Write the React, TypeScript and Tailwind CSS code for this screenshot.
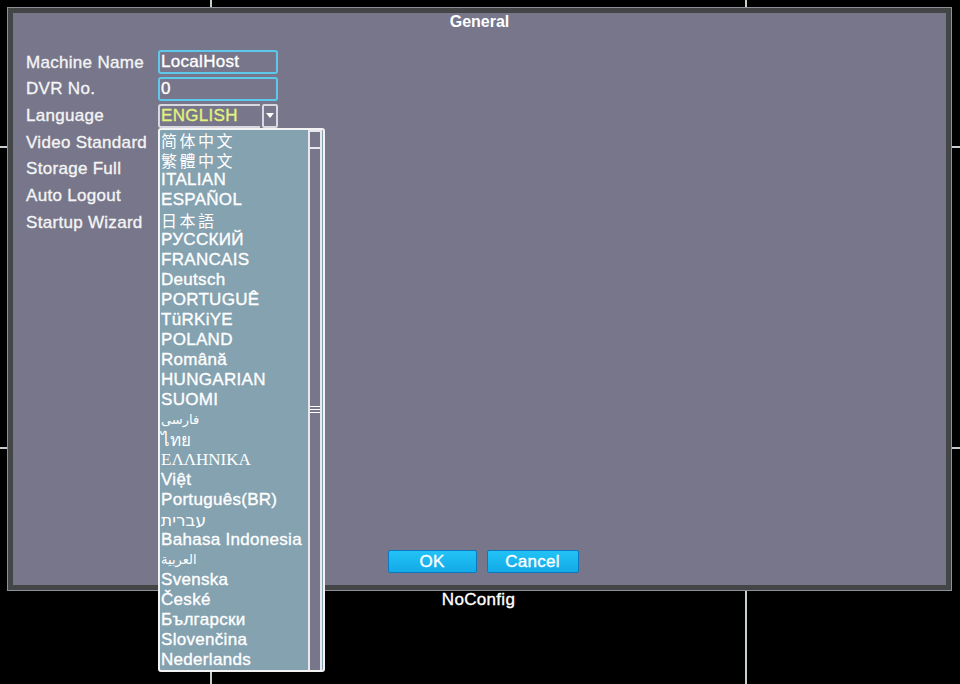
const LANGS: { label: string; font?: string; size?: string }[] = [
  { label: "简体中文", font: "cjk" },
  { label: "繁體中文", font: "cjk" },
  { label: "ITALIAN" },
  { label: "ESPAÑOL" },
  { label: "日本語", font: "cjk" },
  { label: "РУССКИЙ" },
  { label: "FRANCAIS" },
  { label: "Deutsch" },
  { label: "PORTUGUÊ" },
  { label: "TüRKiYE" },
  { label: "POLAND" },
  { label: "Română" },
  { label: "HUNGARIAN" },
  { label: "SUOMI" },
  { label: "فارسی", font: "dejavu", size: "small" },
  { label: "ไทย", font: "dejavu" },
  { label: "ΕΛΛΗΝΙΚΑ", font: "serif" },
  { label: "Việt" },
  { label: "Português(BR)" },
  { label: "עברית", font: "dejavu" },
  { label: "Bahasa Indonesia" },
  { label: "العربية", font: "dejavu", size: "small" },
  { label: "Svenska" },
  { label: "České" },
  { label: "Български" },
  { label: "Slovenčina" },
  { label: "Nederlands" },
];

const LABELS = [
  "Machine Name",
  "DVR No.",
  "Language",
  "Video Standard",
  "Storage Full",
  "Auto Logout",
  "Startup Wizard",
];

// OSD text is a little heavier than plain Arial
const osd = "tracking-[0.3px] [-webkit-text-stroke:0.35px_currentColor]";

function fontClass(font?: string, size?: string) {
  const sz = size === "small" ? "text-[13px]" : "text-[17px]";
  if (font === "cjk") return `text-[16px] tracking-[2.5px] font-['Noto_Sans_CJK_SC',sans-serif]`;
  if (font === "serif") return `${sz} font-['Liberation_Serif',serif]`;
  if (font === "dejavu") return `${sz} font-['DejaVu_Sans',sans-serif]`;
  return `${sz} font-['Liberation_Sans',Arial,sans-serif] ${osd}`;
}

function TextBox({ value }: { value: string }) {
  return (
    <div className={`h-[24px] w-[120px] rounded-[3px] border-2 border-[#5cc9ea] px-[1px] text-[17px] leading-[20px] text-white ${osd}`}>
      {value}
    </div>
  );
}

function LanguageSelect() {
  return (
    <div className="flex h-[24px] w-[120px] items-stretch">
      <div className={`flex-1 rounded-l-[3px] border-2 border-r-0 border-[#d8d8e0] px-[1px] text-[17px] leading-[20px] text-[#e2f27c] ${osd}`}>
        ENGLISH
      </div>
      <div className="ml-[2px] flex w-[16px] items-center justify-center rounded-[2px] border-2 border-[#d8d8e0]">
        <svg width="8" height="6" viewBox="0 0 8 6">
          <path d="M0 0 L8 0 L4 5 Z" fill="#ffffff" />
        </svg>
      </div>
    </div>
  );
}

function LanguageList() {
  return (
    <div className="absolute left-[158px] top-[128px] flex h-[544px] w-[167px] rounded-[3px] border-2 border-[#f2f2f2] bg-[#84a2b0]">
      <div className="flex-1 pl-[1px] text-white">
        {LANGS.map((l) => (
          <div
            key={l.label}
            className={`h-5 whitespace-nowrap leading-5 ${fontClass(l.font, l.size)}`}
          >
            {l.label}
          </div>
        ))}
      </div>
      {/* scrollbar */}
      <div className="mr-[1px] flex w-[14px] flex-col">
        <div className="h-[19px] border-2 border-[#e8e8ee] bg-[#77768a]" />
        <div className="flex flex-1 flex-col items-center justify-center border-x-2 border-b-0 border-[#e8e8ee] bg-[#77768a]">
          <div className="flex w-full flex-col gap-[2px]">
            <div className="h-[1px] bg-white" />
            <div className="h-[1px] bg-white" />
            <div className="h-[1px] bg-white" />
          </div>
        </div>
      </div>
    </div>
  );
}

function Button({ label, width }: { label: string; width: string }) {
  return (
    <div
      className={`flex h-[23px] ${width} items-center justify-center rounded-[2px] border border-[#0e78bd] bg-gradient-to-b from-[#22c2f6] to-[#12aae8] text-[17px] text-white ${osd}`}
    >
      {label}
    </div>
  );
}

export default function App() {
  return (
    <div className="relative h-[684px] w-[960px] overflow-hidden bg-black font-['Liberation_Sans',Arial,sans-serif]">
      {/* live-view grid behind the menu */}
      <div className="absolute left-[210px] top-0 h-full w-[2px] bg-[#c6d0c8]" />
      <div className="absolute left-[745px] top-0 h-full w-[2px] bg-[#c6d0c8]" />
      <div className="absolute left-0 top-[146px] h-[2px] w-full bg-[#c6ccd0]" />
      <div className="absolute left-0 top-[447px] h-[2px] w-full bg-[#c6ccd0]" />

      <div className="relative pl-[7px] pt-[7px]">
        <div className="h-[584px] w-[945px] border border-[#8e9098] bg-[#444546] p-[5px]">
          <div className="flex h-full flex-col bg-[#77768a] pl-[13px]">
            <div className="flex h-[17px] items-center justify-center pr-[13px] text-[16px] font-bold text-white">
              General
            </div>
            <div className="mt-[19px] flex flex-col">
              {LABELS.map((label, i) => (
                <div key={label} className="flex h-[26.67px] items-center">
                  <div className={`w-[132px] text-[17px] text-[#f4f4f4] ${osd}`}>
                    {label}
                  </div>
                  {i === 0 && <TextBox value="LocalHost" />}
                  {i === 1 && <TextBox value="0" />}
                  {i === 2 && <LanguageSelect />}
                </div>
              ))}
            </div>
            <div className="mt-auto mb-[12px] flex justify-center gap-[10px] pr-[6px]">
              <Button label="OK" width="w-[89px]" />
              <Button label="Cancel" width="w-[92px]" />
            </div>
          </div>
        </div>
      </div>
      <div className={`relative flex h-[18px] w-[960px] items-center justify-center pr-[3px] text-[17px] text-white ${osd}`}>
        NoConfig
      </div>

      <LanguageList />
    </div>
  );
}
